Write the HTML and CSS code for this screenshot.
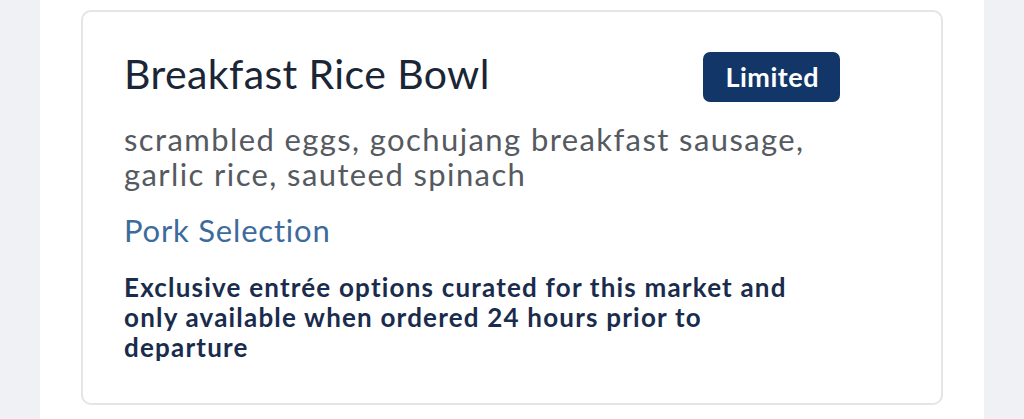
FILE: index.html
```html
<!DOCTYPE html>
<html>
<head>
<meta charset="utf-8">
<link rel="stylesheet" href="styles.css">
</head>
<body>
<div class="panel">
  <div class="card">
    <div class="head">
      <h1 class="title">Breakfast Rice Bowl</h1>
      <span class="badge">Limited</span>
    </div>
    <p class="desc">scrambled eggs, gochujang breakfast sausage, garlic rice, sauteed spinach</p>
    <p class="tag">Pork Selection</p>
    <p class="note">Exclusive entrée options curated for this market and only available when ordered 24 hours prior to departure</p>
  </div>
</div>
</body>
</html>
```
FILE: styles.css
```css
html, body {
  margin: 0;
  padding: 0;
  height: 100%;
}
body {
  background: #f0f1f4;
  font-family: "Lato", "Open Sans", sans-serif;
  overflow: hidden;
}
.panel {
  background: #ffffff;
  margin: 0 40px;
  height: 100%;
  padding-top: 10px;
  box-sizing: border-box;
}
.card {
  margin-left: 41px;
  width: 862px;
  height: 395px;
  box-sizing: border-box;
  border: 2px solid #e4e5e7;
  border-radius: 10px;
  padding: 36px 40px 0 41px;
}
.head {
  display: flex;
  justify-content: space-between;
  align-items: flex-start;
  width: 716px;
}
.title {
  margin: 0;
  font-weight: 400;
  font-size: 41px;
  line-height: 52px;
  letter-spacing: 0.4px;
  color: #1a2535;
}
.badge {
  margin-top: 4px;
  background: #123668;
  color: #fff;
  font-weight: 700;
  font-size: 27px;
  letter-spacing: 0.5px;
  line-height: 50px;
  height: 50px;
  padding: 0 21px 0 22px;
  border-radius: 7px;
}
.desc {
  margin: 20px 0 0;
  font-size: 31px;
  line-height: 35px;
  letter-spacing: 1.4px;
  color: #555a60;
  width: 720px;
}
.tag {
  margin: 18px 0 0;
  font-size: 31px;
  line-height: 40px;
  letter-spacing: 0.8px;
  color: #3c6b9c;
}
.note {
  margin: 22px 0 0;
  font-size: 26px;
  line-height: 30px;
  letter-spacing: 1.2px;
  font-weight: 700;
  color: #1a2c4d;
  width: 700px;
}
```
